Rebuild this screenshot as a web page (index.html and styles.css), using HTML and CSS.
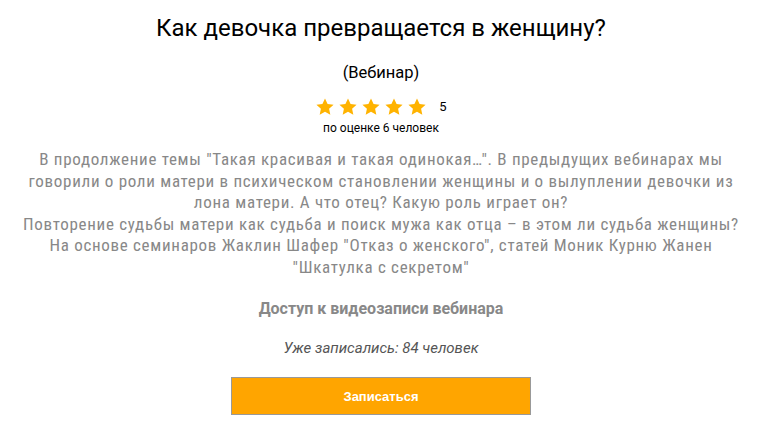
FILE: index.html
```html
<!DOCTYPE html>
<html lang="ru">
<head>
<meta charset="utf-8">
<title>Вебинар</title>
<link rel="stylesheet" href="styles.css">
</head>
<body>
<main class="page">
  <h1 class="title">Как девочка превращается в женщину?</h1>
  <div class="type">(Вебинар)</div>
  <div class="rating">
    <div class="stars">
      <svg class="star" viewBox="0 0 24 24"><path d="M12 1.8l3.1 6.6 7.2.8-5.4 4.9 1.5 7.1L12 17.6l-6.4 3.6 1.5-7.1L1.7 9.2l7.2-.8z"/></svg>
      <svg class="star" viewBox="0 0 24 24"><path d="M12 1.8l3.1 6.6 7.2.8-5.4 4.9 1.5 7.1L12 17.6l-6.4 3.6 1.5-7.1L1.7 9.2l7.2-.8z"/></svg>
      <svg class="star" viewBox="0 0 24 24"><path d="M12 1.8l3.1 6.6 7.2.8-5.4 4.9 1.5 7.1L12 17.6l-6.4 3.6 1.5-7.1L1.7 9.2l7.2-.8z"/></svg>
      <svg class="star" viewBox="0 0 24 24"><path d="M12 1.8l3.1 6.6 7.2.8-5.4 4.9 1.5 7.1L12 17.6l-6.4 3.6 1.5-7.1L1.7 9.2l7.2-.8z"/></svg>
      <svg class="star" viewBox="0 0 24 24"><path d="M12 1.8l3.1 6.6 7.2.8-5.4 4.9 1.5 7.1L12 17.6l-6.4 3.6 1.5-7.1L1.7 9.2l7.2-.8z"/></svg>
    </div>
    <span class="score">5</span>
  </div>
  <div class="votes">по оценке 6 человек</div>
  <p class="desc">В продолжение темы "Такая красивая и такая одинокая…". В предыдущих вебинарах мы говорили о роли матери в психическом становлении женщины и о вылуплении девочки из лона матери. А что отец? Какую роль играет он?<br>Повторение судьбы матери как судьба и поиск мужа как отца – в этом ли судьба женщины?<br>На основе семинаров Жаклин Шафер "Отказ о женского", статей Моник Курню Жанен "Шкатулка с секретом"</p>
  <h2 class="access">Доступ к видеозаписи вебинара</h2>
  <div class="signed">Уже записались: 84 человек</div>
  <button class="btn" type="button">Записаться</button>
</main>
</body>
</html>
```

FILE: styles.css
```css
html, body {
  margin: 0;
  padding: 0;
  background: #fff;
}
body {
  font-family: Roboto, "Noto Sans", sans-serif;
  color: #000;
}
.page {
  width: 762px;
  display: flex;
  flex-direction: column;
  align-items: center;
  text-align: center;
}
.title {
  margin: 14px 0 0;
  font-size: 24px;
  font-weight: 400;
  line-height: 28px;
}
.type {
  margin-top: 21px;
  font-size: 16.5px;
  line-height: 20px;
}
.rating {
  margin-top: 12px;
  display: flex;
  align-items: center;
  height: 24px;
}
.stars {
  display: flex;
  gap: 3px;
}
.star {
  width: 20px;
  height: 20px;
  fill: #ffb300;
  display: block;
}
.score {
  margin-left: 12px;
  font-size: 13px;
  line-height: 16px;
}
.votes {
  margin-top: 2px;
  font-size: 12px;
  line-height: 14px;
}
.desc {
  margin: 14px 0 0;
  width: 724px;
  color: #888;
  font-family: "Roboto Condensed", "Liberation Sans Narrow", Roboto, sans-serif;
  font-size: 17px;
  letter-spacing: 0.7px;
  line-height: 21.5px;
}
.access {
  margin: 22px 0 0;
  font-size: 16px;
  font-weight: 700;
  color: #888;
  line-height: 18px;
}
.signed {
  margin-top: 21px;
  font-size: 15px;
  font-style: italic;
  color: #555;
  line-height: 18px;
}
.btn {
  margin-top: 20px;
  width: 300px;
  height: 38px;
  background: #ffa500;
  border: 1px solid #999;
  color: #fff;
  font-family: "Liberation Sans", Arial, sans-serif;
  font-weight: 700;
  font-size: 13px;
  cursor: pointer;
  padding: 0;
}
```
